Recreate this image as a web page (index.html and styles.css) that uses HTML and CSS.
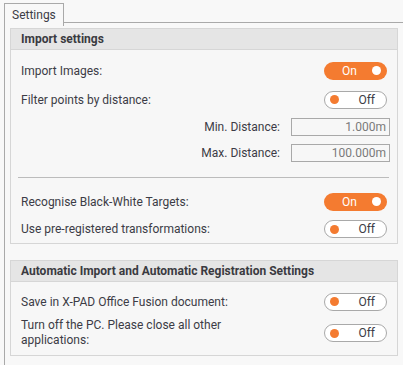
FILE: index.html
```html
<!DOCTYPE html>
<html>
<head>
<meta charset="utf-8">
<link rel="stylesheet" href="styles.css">
</head>
<body>
<div class="tabs">
  <div class="tab">Settings</div>
</div>
<div class="pane">
  <section class="group">
    <div class="group-head">Import settings</div>
    <div class="group-body">
      <div class="row">
        <span class="label">Import Images:</span>
        <span class="toggle on"><span class="tt">On</span><span class="dot"></span></span>
      </div>
      <div class="row">
        <span class="label">Filter points by distance:</span>
        <span class="toggle off"><span class="dot"></span><span class="tt">Off</span></span>
      </div>
      <div class="row sub">
        <span class="sublabel">Min. Distance:</span>
        <span class="input">1.000m</span>
      </div>
      <div class="row sub">
        <span class="sublabel">Max. Distance:</span>
        <span class="input">100.000m</span>
      </div>
      <hr class="sep">
      <div class="row">
        <span class="label">Recognise Black-White Targets:</span>
        <span class="toggle on"><span class="tt">On</span><span class="dot"></span></span>
      </div>
      <div class="row last">
        <span class="label">Use pre-registered transformations:</span>
        <span class="toggle off"><span class="dot"></span><span class="tt">Off</span></span>
      </div>
    </div>
  </section>
  <section class="group g2">
    <div class="group-head">Automatic Import and Automatic Registration Settings</div>
    <div class="group-body b2">
      <div class="row r2">
        <span class="label">Save in X-PAD Office Fusion document:</span>
        <span class="toggle off"><span class="dot"></span><span class="tt">Off</span></span>
      </div>
      <div class="row r3">
        <span class="label wrap">Turn off the PC. Please close all other applications:</span>
        <span class="toggle off"><span class="dot"></span><span class="tt">Off</span></span>
      </div>
    </div>
  </section>
</div>
</body>
</html>
```

FILE: styles.css
```css
html, body {
  margin: 0;
  padding: 0;
  background: #f8f8f8;
  font-family: Roboto, "Liberation Sans", sans-serif;
  font-size: 12px;
  color: #3c3c46;
}
.tabs {
  display: flex;
  padding: 3px 0 0 4px;
  height: 22px;
  box-sizing: border-box;
  position: relative;
  z-index: 1;
}
.tab {
  width: 60px;
  height: 23px;
  box-sizing: border-box;
  border: 1px solid #a9a9a9;
  border-bottom: none;
  background: #f8f8f8;
  padding: 3px 0 0 7px;
  line-height: 16px;
  font-size: 12px;
}
.pane {
  margin-left: 4px;
  border-left: 1px solid #a9a9a9;
  border-top: 1px solid #a9a9a9;
  padding: 5px 5px 10px 5px;
  display: flex;
  flex-direction: column;
  gap: 16px;
  min-height: 340px;
  box-sizing: border-box;
}
.group {
  width: 388px;
  border: 1px solid #d6d6d6;
  box-sizing: border-box;
  background: #f7f7f7;
}
.group-head {
  background: #e5e5e5;
  border-bottom: 1px solid #d6d6d6;
  height: 21px;
  box-sizing: border-box;
  padding-left: 10px;
  font-weight: bold;
  line-height: 20px;
  color: #3a3a40;
}
.group-body {
  padding: 6px 10px 1px 10px;
  display: flex;
  flex-direction: column;
}
.row {
  display: flex;
  align-items: center;
  justify-content: space-between;
  height: 29px;
}
.row.sub {
  height: 26px;
  justify-content: flex-end;
  gap: 11px;
}
.row.last { height: 26px; }
.sublabel { text-align: right; }
.sep {
  margin: 11px 0 9px -3px;
  border: none;
  border-top: 1px solid #bcbcbc;
  height: 0;
  width: 371px;
  align-self: flex-start;
}
.input {
  width: 99px;
  height: 18px;
  box-sizing: border-box;
  border: 1px solid #a9a9a9;
  background: #f7f7f7;
  text-align: right;
  padding-right: 3px;
  line-height: 16px;
  color: #7a7a7a;
  margin-right: -3px;
}
.toggle {
  width: 63px;
  height: 18px;
  box-sizing: border-box;
  border-radius: 9px;
  display: flex;
  align-items: center;
  justify-content: space-between;
  line-height: 16px;
}
.toggle.on {
  background: #f47b30;
  color: #fff;
  padding: 0 6px 0 18px;
}
.toggle.on .dot {
  width: 9px;
  height: 9px;
  border-radius: 50%;
  background: #fff;
}
.toggle.off {
  background: #fff;
  border: 1px solid #a9a9a9;
  color: #3c3c46;
  padding: 0 11px 0 5px;
}
.toggle.off .dot {
  width: 9px;
  height: 9px;
  border-radius: 50%;
  background: #f47b30;
}
.b2 { padding: 6px 10px 4px 10px; }
.row.r2 { height: 27px; }
.row.r3 { height: 36px; }
.label.wrap { width: 240px; line-height: 15px; }
```
